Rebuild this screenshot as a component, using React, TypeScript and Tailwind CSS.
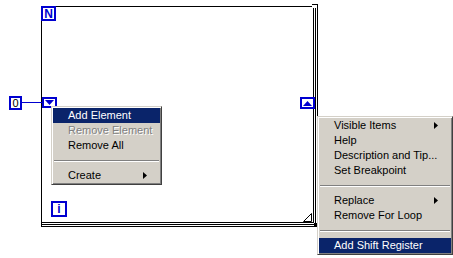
import React from "react";

type Item = { label: string; sep?: boolean; sub?: boolean; active?: boolean; disabled?: boolean };

const loopMenu: Item[] = [
  { label: "Add Element", active: true },
  { label: "Remove Element", disabled: true },
  { label: "Remove All" },
  { label: "", sep: true },
  { label: "Create", sub: true },
];

const frameMenu: Item[] = [
  { label: "Visible Items", sub: true },
  { label: "Help" },
  { label: "Description and Tip..." },
  { label: "Set Breakpoint" },
  { label: "", sep: true },
  { label: "Replace", sub: true },
  { label: "Remove For Loop" },
  { label: "", sep: true },
  { label: "Add Shift Register", active: true },
];

function SubArrow({ white }: { white?: boolean }) {
  return (
    <svg width="4" height="7" viewBox="0 0 4 7" className="mr-[13px]">
      <path d="M0 0 L4 3.5 L0 7 Z" fill={white ? "#fff" : "#000"} />
    </svg>
  );
}

function PopupMenu({ items, className }: { items: Item[]; className: string }) {
  return (
    <div
      className={`absolute border border-t-[#d4d0c8] border-l-[#d4d0c8] border-r-[#404040] border-b-[#404040] bg-[#d4d0c8] p-[1px] shadow-[inset_1px_1px_0_#fff,inset_-1px_-1px_0_#808080] ${className}`}
    >
      {items.map((it, i) =>
        it.sep ? (
          <div key={i} className="h-[15px] pt-[7px] px-[1px]">
            <div className="border-t border-b border-t-[#808080] border-b-white" />
          </div>
        ) : (
          <div
            key={i}
            className={`h-[15px] flex items-center justify-between pl-[15px] leading-none ${
              it.active ? "bg-[#0a246a] text-white" : it.disabled ? "text-[#808080] [text-shadow:1px_1px_0_#fff]" : "text-black"
            }`}
          >
            <span>{it.label}</span>
            {it.sub && <SubArrow white={it.active} />}
          </div>
        )
      )}
    </div>
  );
}

function Terminal({ className, children }: { className: string; children: React.ReactNode }) {
  return (
    <div className={`absolute flex items-center justify-center border-2 border-[#0000d0] bg-white ${className}`}>
      {children}
    </div>
  );
}

export default function App() {
  return (
    <div className="relative w-[453px] h-[258px] bg-white overflow-hidden font-['Liberation_Sans',Arial,sans-serif] text-[11px]">
      {/* For Loop frame */}
      <div className="absolute left-[41px] top-[6px] w-[277px] h-[221px] border-r border-b border-black pr-[1px] pb-[1px]">
        <div className="h-full border-r border-b border-black pr-[1px] pb-[1px]">
          <div className="h-full border border-black bg-white" />
        </div>
      </div>

      {/* frame corner details */}
      <div className="absolute left-[312px] top-[4px] w-[6px] h-[4px] border-t border-r border-black bg-white" />
      <div className="absolute left-[41px] top-[222px] w-[6px] h-[5px] border-l border-b border-black" />
      <div className="absolute left-[314px] top-[223px] w-[4px] h-[4px] bg-black" />
      <svg className="absolute left-[303px] top-[213px]" width="9" height="9" viewBox="0 0 9 9">
        <path d="M0.5 8.5 L8.5 0.5 L8.5 8.5 Z" fill="#fff" stroke="#000" strokeWidth="1" />
      </svg>

      {/* N count terminal */}
      <Terminal className="left-[41px] top-[6px] w-[15px] h-[15px]">
        <span className="text-[#0000d0] font-bold text-[12px] leading-none">N</span>
      </Terminal>

      {/* constant 0 with wire */}
      <Terminal className="left-[9px] top-[96px] w-[13px] h-[14px]">
        <span className="text-black text-[11px] leading-none">0</span>
      </Terminal>
      <div className="absolute left-[22px] top-[102px] w-[20px] h-[1px] bg-[#0000d0]" />

      {/* shift register / tunnel arrows */}
      <Terminal className="left-[42px] top-[97px] w-[15px] h-[11px]">
        <svg width="9" height="5" viewBox="0 0 9 5">
          <path d="M0 0 L9 0 L4.5 5 Z" fill="#0000d0" />
        </svg>
      </Terminal>
      <Terminal className="left-[300px] top-[97px] w-[15px] h-[12px]">
        <svg width="9" height="5" viewBox="0 0 9 5">
          <path d="M0 5 L9 5 L4.5 0 Z" fill="#0000d0" />
        </svg>
      </Terminal>

      {/* iteration terminal */}
      <Terminal className="left-[51px] top-[201px] w-[16px] h-[16px]">
        <span className="text-[#0000d0] font-bold text-[12px] leading-none">i</span>
      </Terminal>

      <PopupMenu items={loopMenu} className="left-[51px] top-[106px] w-[111px]" />
      <PopupMenu items={frameMenu} className="left-[317px] top-[116px] w-[136px]" />
    </div>
  );
}
